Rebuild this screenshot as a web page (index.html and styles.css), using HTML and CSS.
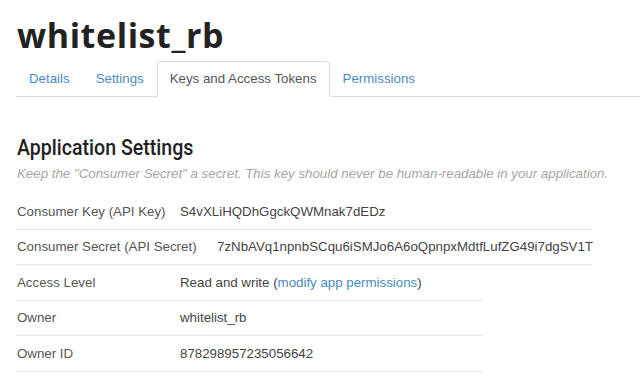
FILE: index.html
```html
<!DOCTYPE html>
<html>
<head>
<meta charset="utf-8">
<link rel="stylesheet" href="styles.css">
</head>
<body>
<div class="page">
  <h1 class="app-title">whitelist_rb</h1>
  <ul class="tabs">
    <li class="tab"><a href="#">Details</a></li>
    <li class="tab"><a href="#">Settings</a></li>
    <li class="tab active"><a href="#">Keys and Access Tokens</a></li>
    <li class="tab"><a href="#">Permissions</a></li>
  </ul>
  <h2 class="section-title"><span class="section-title-text">Application Settings</span></h2>
  <p class="section-note">Keep the "Consumer Secret" a secret. This key should never be human-readable in your application.</p>
  <div class="rows">
    <div class="row wide">
      <span class="label">Consumer Key (API Key)</span>
      <span class="value">S4vXLiHQDhGgckQWMnak7dEDz</span>
    </div>
    <div class="row wide">
      <span class="label label-long">Consumer Secret (API Secret)</span>
      <span class="value">7zNbAVq1npnbSCqu6iSMJo6A6oQpnpxMdtfLufZG49i7dgSV1T</span>
    </div>
    <div class="row">
      <span class="label">Access Level</span>
      <span class="value">Read and write (<a href="#" class="link">modify app permissions</a>)</span>
    </div>
    <div class="row">
      <span class="label">Owner</span>
      <span class="value">whitelist_rb</span>
    </div>
    <div class="row">
      <span class="label">Owner ID</span>
      <span class="value">878298957235056642</span>
    </div>
  </div>
</div>
</body>
</html>
```
FILE: styles.css
```css
html, body {
  margin: 0;
  padding: 0;
  background: #fff;
}
body {
  font-family: "Liberation Sans", Arial, sans-serif;
  font-size: 13.3px;
  color: #444;
}
.page {
  padding-left: 16px;
}
.app-title {
  margin: 0;
  padding: 14px 0 0 1px;
  font-family: "Open Sans", sans-serif;
  font-weight: 700;
  font-size: 34px;
  line-height: 42px;
  color: #222;
  letter-spacing: 0.6px;
}
.tabs {
  list-style: none;
  margin: 5px 0 0 0;
  padding: 0;
  display: flex;
  border-bottom: 1px solid #ddd;
}
.tab {
  margin-bottom: -1px;
}
.tab a {
  display: block;
  padding: 0 12px;
  line-height: 34px;
  border: 1px solid transparent;
  border-radius: 4px 4px 0 0;
  color: #4a8bc2;
  text-decoration: none;
}
.tab.active a {
  color: #555;
  background: #fff;
  border-color: #ddd;
  border-bottom-color: #fff;
}
.section-title {
  margin: 38px 0 0 1px;
  font-family: Roboto, "Liberation Sans", sans-serif;
  font-weight: 500;
  font-size: 22px;
  line-height: 26px;
  color: #222;
}
.section-title-text {
  display: inline-block;
  transform: scaleX(0.89);
  transform-origin: left center;
}
.section-note {
  margin: 5px 0 0 1px;
  font-style: italic;
  color: #a5a5a5;
  line-height: 16px;
}
.rows {
  margin-top: 12px;
}
.row {
  display: flex;
  width: 467px;
  padding: 7.5px 0 7px 1px;
  line-height: 20px;
  border-bottom: 1px solid #e8e8e8;
  box-sizing: border-box;
}
.row.wide {
  width: 576px;
}
.label {
  width: 163px;
  flex: none;
  color: #555;
}
.label-long {
  width: 200px;
}
.value {
  color: #444;
  white-space: nowrap;
}
.link {
  color: #4a8bc2;
  text-decoration: none;
}
```
